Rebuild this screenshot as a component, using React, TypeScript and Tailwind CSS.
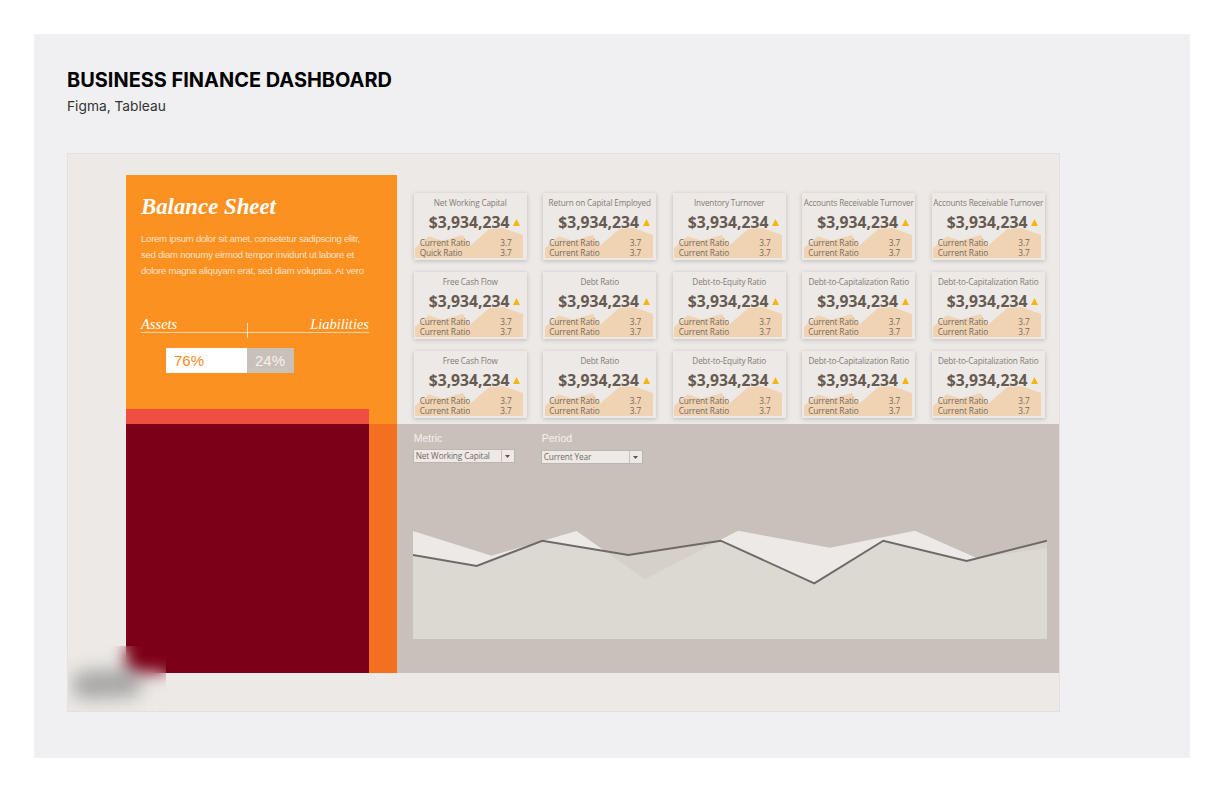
const cards = [
  { title: 'Net Working Capital', second: 'Quick Ratio' },
  { title: 'Return on Capital Employed', second: 'Current Ratio' },
  { title: 'Inventory Turnover', second: 'Current Ratio' },
  { title: 'Accounts Receivable Turnover', second: 'Current Ratio' },
  { title: 'Accounts Receivable Turnover', second: 'Current Ratio' },
  { title: 'Free Cash Flow', second: 'Current Ratio' },
  { title: 'Debt Ratio', second: 'Current Ratio' },
  { title: 'Debt-to-Equity Ratio', second: 'Current Ratio' },
  { title: 'Debt-to-Capitalization Ratio', second: 'Current Ratio' },
  { title: 'Debt-to-Capitalization Ratio', second: 'Current Ratio' },
  { title: 'Free Cash Flow', second: 'Current Ratio' },
  { title: 'Debt Ratio', second: 'Current Ratio' },
  { title: 'Debt-to-Equity Ratio', second: 'Current Ratio' },
  { title: 'Debt-to-Capitalization Ratio', second: 'Current Ratio' },
  { title: 'Debt-to-Capitalization Ratio', second: 'Current Ratio' },
];

function KpiCard({ title, second }: { title: string; second: string }) {
  return (
    <div className="relative h-[67px] w-[113px] overflow-hidden bg-[#ece9e6] shadow-[0_1px_4px_rgba(90,80,70,0.3)] font-['Open_Sans',sans-serif]">
      {/* Sparkline behind the text */}
      <svg className="absolute left-[1.5px] top-[35px]" width="108" height="30" viewBox="0 0 108 30">
        <polygon points="0,20 13.7,8.3 27.7,12.7 47.7,7 55,17.7 74.3,1 88.3,0 108,7 108,30 0,30" fill="#f0d3b3" />
      </svg>
      <div className="relative flex h-full flex-col">
        <div className="mt-[4px] h-[12px] whitespace-nowrap text-center text-[8.2px] leading-[12px] tracking-[-0.16px] text-[#857b74]">{title}</div>
        <div className="mt-[2px] flex h-[22px] items-center pl-[15px]">
          <span className="text-[15.7px] font-bold leading-[22px] text-[#665a51]">$3,934,234</span>
          <svg className="ml-[4px]" width="7" height="7" viewBox="0 0 7 7">
            <polygon points="3.5,0 7,7 0,7" fill="#f7b512" />
          </svg>
        </div>
        <div className="mt-[5px] flex flex-col pl-[6px] pr-[15px] text-[8.3px] leading-[10px] tracking-[-0.1px] text-[#75695f]">
          <div className="flex justify-between"><span>Current Ratio</span><span>3.7</span></div>
          <div className="flex justify-between"><span>{second}</span><span>3.7</span></div>
        </div>
      </div>
    </div>
  );
}

function Dropdown({ label, value, className }: { label: string; value: string; className: string }) {
  return (
    <div className="w-[102px]">
      <div className="h-[14px] pl-[1px] font-['Liberation_Sans',sans-serif] text-[10.5px] leading-[14px] text-[#f4f1ee]">{label}</div>
      <div className={`flex h-[14px] items-center border border-[#bdb5af] bg-[#ece9e6] ${className}`}>
        <span className="flex-1 pl-[2px] font-['Open_Sans',sans-serif] text-[8.3px] leading-[12px] tracking-[-0.15px] text-[#75695f]">{value}</span>
        <span className="flex h-full w-[13px] items-center justify-center border-l border-[#c9c0ba]">
          <svg width="5" height="3" viewBox="0 0 5 3"><polygon points="0,0 5,0 2.5,3" fill="#5e5249" /></svg>
        </span>
      </div>
    </div>
  );
}

function TrendChart() {
  return (
    <svg className="block" width="634" height="110" viewBox="413 530 634 110">
      <polygon
        points="413,531 491.7,555.7 576.5,531 645,579.3 738,530.7 830,547.7 915,530.7 976.7,558 1047,548 1047,639 413,639"
        fill="#ece9e6"
      />
      <polygon
        points="413,555 476.7,566 542.3,540.7 628.3,555 720.7,540.7 814.3,583.3 883.3,540.7 966.7,561 1047,540.7 1047,639 413,639"
        fill="rgb(216,213,205)"
        fillOpacity="0.8"
      />
      <polyline
        points="413,555 476.7,566 542.3,540.7 628.3,555 720.7,540.7 814.3,583.3 883.3,540.7 966.7,561 1047,540.7"
        fill="none"
        stroke="#6f6a66"
        strokeWidth="2"
      />
    </svg>
  );
}

export default function App() {
  return (
    <div className="h-[792px] w-[1224px] overflow-hidden bg-white p-[34px]">
      <div className="h-[724px] w-[1156px] bg-[#f0f0f2] pl-[33px] pt-[33px]">
        <h1 className="font-['Inter',sans-serif] text-[19.95px] font-bold leading-[26px] text-black">BUSINESS FINANCE DASHBOARD</h1>
        <p className="mt-[3px] font-['Inter',sans-serif] text-[13.75px] leading-[20px] text-[#333]">Figma, Tableau</p>

        {/* Dashboard */}
        <div className="relative mt-[37px] h-[559px] w-[993px] border border-[#e4e0dd] bg-[#ece9e6] pl-[58px] pt-[21px]">
          <div className="flex h-[498px]">
            {/* Left column */}
            <div className="flex w-[271px] flex-col">
              <div className="h-[234px] bg-[#fa9120] pl-[15px] pt-[17px]">
                <div className="font-['Liberation_Serif',serif] text-[22.8px] font-bold italic leading-[30px] text-white">Balance Sheet</div>
                <p className="mt-[9px] whitespace-nowrap font-['Liberation_Sans',sans-serif] text-[9.6px] leading-[16px] tracking-[-0.27px] text-white/75">
                  Lorem ipsum dolor sit amet, consetetur sadipscing elitr,
                  <br />
                  sed diam nonumy eirmod tempor invidunt ut labore et
                  <br />
                  dolore magna aliquyam erat, sed diam voluptua. At vero
                </p>
                <div className="relative mt-[36px] flex h-[18px] w-[228px] items-end justify-between border-b border-white/60 font-['Liberation_Serif',serif] text-[14.5px] italic leading-[16px] text-white">
                  <span>Assets</span>
                  <span>Liabilities</span>
                  <span className="absolute left-[106px] top-[8px] h-[15px] w-px bg-white/70" />
                </div>
                <div className="ml-[25px] mt-[15px] flex h-[25px] font-['Liberation_Sans',sans-serif] text-[15px] leading-[25px]">
                  <div className="w-[81px] bg-white pl-[8px] text-[#f58a26]">76%</div>
                  <div className="w-[47px] bg-[#c9c0ba] pl-[8px] text-[#f4f1ee]">24%</div>
                </div>
              </div>
              <div className="flex h-[15px]">
                <div className="w-[243px] bg-[#f04e3e]" />
                <div className="flex-1 bg-[#fa9120]" />
              </div>
              <div className="flex flex-1">
                <div className="w-[243px] bg-[#7d0019]" />
                <div className="flex-1 bg-[#f37021]" />
              </div>
            </div>

            {/* Right column */}
            <div className="flex w-[663px] flex-col">
              <div className="grid h-[249px] grid-cols-[repeat(5,113px)] grid-rows-[repeat(3,67px)] gap-x-[16.5px] gap-y-[12px] pl-[17px] pt-[18px]">
                {cards.map((c, i) => (
                  <KpiCard key={i} title={c.title} second={c.second} />
                ))}
              </div>
              <div className="flex-1 bg-[#c9c0ba] pl-[16px] pt-[7px]">
                <div className="flex h-[99px] items-start gap-[26px]">
                  <Dropdown label="Metric" value="Net Working Capital" className="mt-[4px]" />
                  <Dropdown label="Period" value="Current Year" className="mt-[5px]" />
                </div>
                <TrendChart />
              </div>
            </div>
          </div>

          {/* Blurred-out corner */}
          <div className="absolute bottom-0 left-0 h-[65px] w-[98px] overflow-hidden backdrop-blur-[8px]">
            <div className="absolute left-[4px] top-[24px] h-[28px] w-[70px] -rotate-3 rounded-full bg-[#8a8a8a] opacity-70 blur-[9px]" />
          </div>
        </div>
      </div>
    </div>
  );
}
